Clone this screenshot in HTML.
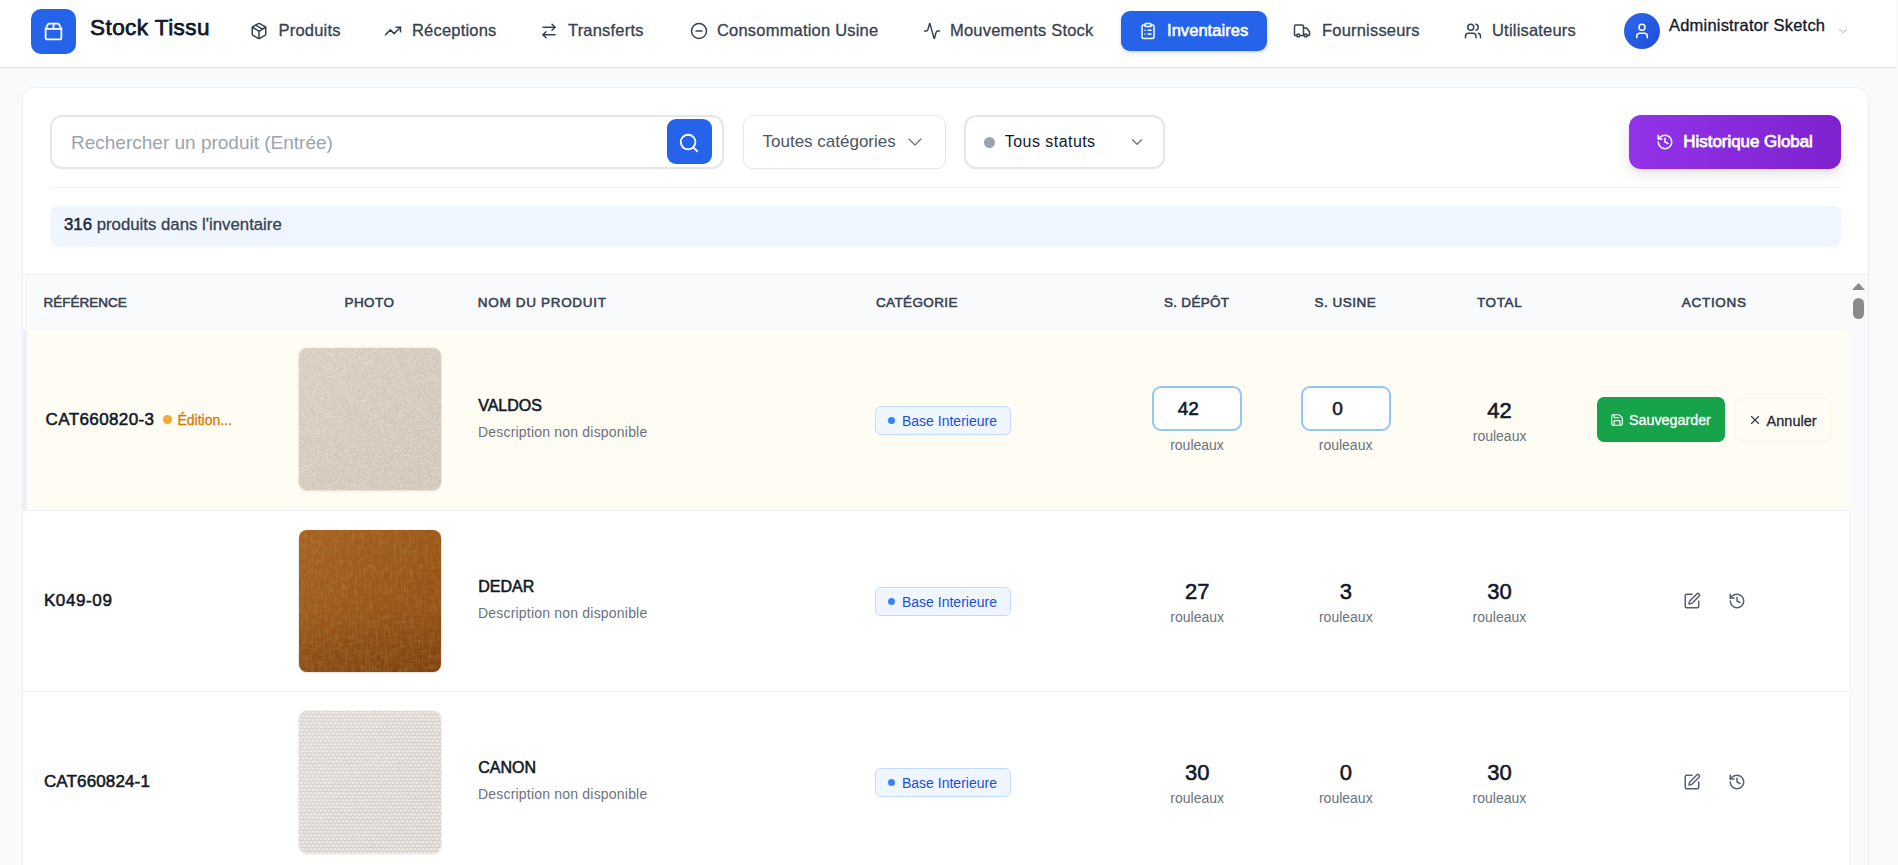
<!DOCTYPE html>
<html lang="fr">
<head>
<meta charset="utf-8">
<title>Stock Tissu - Inventaires</title>
<style>
*{box-sizing:border-box;margin:0;padding:0}
html,body{width:1898px;height:865px;overflow:hidden}
body{position:relative;background:#f9fafb;font-family:"Liberation Sans",sans-serif;color:#111827}
.abs{position:absolute}
svg.i{position:absolute;fill:none;stroke:currentColor;stroke-width:2;stroke-linecap:round;stroke-linejoin:round;overflow:visible}
.t{position:absolute;white-space:nowrap;line-height:1}
.photo{border-radius:8px;box-shadow:0 0 0 1px rgba(0,0,0,.03),0 1px 3px rgba(0,0,0,.10)}
</style>
</head>
<body>
<div class="abs" style="left:0px;top:0px;width:1896px;height:67px;background:#fff"></div>
<div class="abs" style="left:0px;top:67px;width:1896px;height:1px;background:#e5e7eb"></div>
<div class="abs" style="left:0px;top:68px;width:1896px;height:2px;background:linear-gradient(rgba(0,0,0,.025),rgba(0,0,0,0))"></div>
<div class="abs" style="left:31px;top:9px;width:45px;height:45px;border-radius:10px;background:#2563eb"></div>
<svg class="i" style="left:43px;top:21px;color:#fff;stroke-width:2" width="21" height="21" viewBox="0 0 24 24"><path d="M3 9h18v10a2 2 0 0 1-2 2H5a2 2 0 0 1-2-2V9Z"/><path d="m3 9 2.45-4.9A2 2 0 0 1 7.24 3h9.52a2 2 0 0 1 1.8 1.1L21 9"/><path d="M12 3v6"/></svg>
<div class="t" style="top:17.00px;font-size:22.5px;color:#111827;letter-spacing:0.45px;-webkit-text-stroke:.75px #111827;left:90.00px;">Stock Tissu</div>
<svg class="i" style="left:250px;top:22px;color:#374151;stroke-width:2" width="18" height="18" viewBox="0 0 24 24"><path d="M11 21.73a2 2 0 0 0 2 0l7-4A2 2 0 0 0 21 16V8a2 2 0 0 0-1-1.73l-7-4a2 2 0 0 0-2 0l-7 4A2 2 0 0 0 3 8v8a2 2 0 0 0 1 1.73z"/><path d="M12 22V12"/><path d="m3.3 7 7.703 4.734a2 2 0 0 0 1.994 0L20.7 7"/><path d="m7.5 4.27 9 5.15"/></svg>
<div class="t" style="top:22.00px;font-size:16.5px;color:#374151;letter-spacing:0.2px;-webkit-text-stroke:.3px #374151;left:278.50px;">Produits</div>
<svg class="i" style="left:384px;top:21.5px;color:#374151;stroke-width:2" width="18" height="18" viewBox="0 0 24 24"><polyline points="22 7 13.5 15.5 8.5 10.5 2 17"/><polyline points="16 7 22 7 22 13"/></svg>
<div class="t" style="top:22.00px;font-size:16.5px;color:#374151;letter-spacing:0.2px;-webkit-text-stroke:.3px #374151;left:412.00px;">Réceptions</div>
<svg class="i" style="left:540px;top:22px;color:#374151;stroke-width:2" width="18" height="18" viewBox="0 0 24 24"><path d="m16 3 4 4-4 4"/><path d="M20 7H4"/><path d="m8 21-4-4 4-4"/><path d="M4 17h16"/></svg>
<div class="t" style="top:22.00px;font-size:16.5px;color:#374151;letter-spacing:0.2px;-webkit-text-stroke:.3px #374151;left:568.00px;">Transferts</div>
<svg class="i" style="left:689.5px;top:22px;color:#374151;stroke-width:2" width="18" height="18" viewBox="0 0 24 24"><circle cx="12" cy="12" r="10"/><path d="M8 12h8"/></svg>
<div class="t" style="top:22.00px;font-size:16.5px;color:#374151;letter-spacing:0.2px;-webkit-text-stroke:.3px #374151;left:717.00px;">Consommation Usine</div>
<svg class="i" style="left:922.5px;top:22px;color:#374151;stroke-width:2" width="18" height="18" viewBox="0 0 24 24"><path d="M22 12h-2.48a2 2 0 0 0-1.93 1.46l-2.35 8.36a.25.25 0 0 1-.48 0L9.24 2.18a.25.25 0 0 0-.48 0l-2.35 8.36A2 2 0 0 1 4.49 12H2"/></svg>
<div class="t" style="top:22.00px;font-size:16.5px;color:#374151;letter-spacing:0.2px;-webkit-text-stroke:.3px #374151;left:950.00px;">Mouvements Stock</div>
<svg class="i" style="left:1293px;top:22px;color:#374151;stroke-width:2" width="18" height="18" viewBox="0 0 24 24"><path d="M14 18V6a2 2 0 0 0-2-2H4a2 2 0 0 0-2 2v11a1 1 0 0 0 1 1h2"/><path d="M15 18H9"/><path d="M19 18h2a1 1 0 0 0 1-1v-3.65a1 1 0 0 0-.22-.624l-3.48-4.35A1 1 0 0 0 17.52 8H14"/><circle cx="17" cy="18" r="2"/><circle cx="7" cy="18" r="2"/></svg>
<div class="t" style="top:22.00px;font-size:16.5px;color:#374151;letter-spacing:0.2px;-webkit-text-stroke:.3px #374151;left:1322.00px;">Fournisseurs</div>
<svg class="i" style="left:1464px;top:22px;color:#374151;stroke-width:2" width="18" height="18" viewBox="0 0 24 24"><path d="M16 21v-2a4 4 0 0 0-4-4H6a4 4 0 0 0-4 4v2"/><circle cx="9" cy="7" r="4"/><path d="M22 21v-2a4 4 0 0 0-3-3.87"/><path d="M16 3.13a4 4 0 0 1 0 7.75"/></svg>
<div class="t" style="top:22.00px;font-size:16.5px;color:#374151;letter-spacing:0.2px;-webkit-text-stroke:.3px #374151;left:1492.00px;">Utilisateurs</div>
<div class="abs" style="left:1121px;top:11px;width:146px;height:40px;border-radius:9px;background:#2563eb;box-shadow:0 2px 4px rgba(37,99,235,.18),0 1px 2px rgba(0,0,0,.08)"></div>
<svg class="i" style="left:1138.5px;top:22px;color:#fff;stroke-width:2" width="18" height="18" viewBox="0 0 24 24"><rect width="8" height="4" x="8" y="2" rx="1" ry="1"/><path d="M16 4h2a2 2 0 0 1 2 2v14a2 2 0 0 1-2 2H6a2 2 0 0 1-2-2V6a2 2 0 0 1 2-2h2"/><path d="M12 11h4"/><path d="M12 16h4"/><path d="M8 11h.01"/><path d="M8 16h.01"/></svg>
<div class="t" style="top:22.00px;font-size:16.5px;color:#fff;letter-spacing:0.05px;-webkit-text-stroke:.55px #fff;left:1167.00px;">Inventaires</div>
<div class="abs" style="left:1624px;top:13px;width:36px;height:36px;border-radius:50%;background:linear-gradient(135deg,#2d68ee,#1d4ed8)"></div>
<svg class="i" style="left:1633px;top:22px;color:#fff;stroke-width:2" width="18" height="18" viewBox="0 0 24 24"><path d="M19 21v-2a4 4 0 0 0-4-4H9a4 4 0 0 0-4 4v2"/><circle cx="12" cy="7" r="4"/></svg>
<div class="t" style="top:17.00px;font-size:16.5px;color:#111827;letter-spacing:0.2px;-webkit-text-stroke:.3px #111827;left:1669.00px;">Administrator Sketch</div>
<svg class="i" style="left:1836px;top:24px;color:#9ca3af;stroke-width:1.5" width="14" height="14" viewBox="0 0 24 24"><path d="m6 9 6 6 6-6"/></svg>
<div class="abs" style="left:22px;top:87px;width:1847px;height:840px;background:#fff;border:1px solid #edeff3;border-radius:12px;box-shadow:0 1px 2px rgba(0,0,0,.02)"></div>
<div class="abs" style="left:50px;top:115px;width:674px;height:54px;border:2px solid #e5e7eb;border-radius:12px;background:#fff;box-shadow:0 1px 2px rgba(0,0,0,.04)"></div>
<div class="t" style="top:133.00px;font-size:19px;color:#9ca3af;left:71.00px;">Rechercher un produit (Entrée)</div>
<div class="abs" style="left:667px;top:119px;width:45px;height:45px;border-radius:9px;background:#2563eb"></div>
<svg class="i" style="left:678px;top:132px;color:#fff;stroke-width:2" width="22" height="22" viewBox="0 0 24 24"><circle cx="11" cy="11" r="8"/><path d="m21 21-4.3-4.3"/></svg>
<div class="abs" style="left:743px;top:115px;width:203px;height:54px;border:1.5px solid #e5e7eb;border-radius:10px;background:#fff;box-shadow:0 1px 2px rgba(0,0,0,.03)"></div>
<div class="t" style="top:133.00px;font-size:17px;color:#4b5563;left:762.50px;">Toutes catégories</div>
<svg class="i" style="left:902.7px;top:130.3px;color:#6b7280;stroke-width:1.3" width="24" height="24" viewBox="0 0 24 24"><path d="m6 9 6 6 6-6"/></svg>
<div class="abs" style="left:964px;top:115px;width:201px;height:54px;border:2px solid #e5e7eb;border-radius:12px;background:#fff;box-shadow:0 1px 2px rgba(0,0,0,.04)"></div>
<div class="abs" style="left:983.8px;top:137px;width:11px;height:11px;border-radius:50%;background:#9ca3af"></div>
<div class="t" style="top:134.00px;font-size:16px;color:#111827;letter-spacing:0.45px;left:1004.80px;">Tous statuts</div>
<svg class="i" style="left:1127.8px;top:133px;color:#6b7280;stroke-width:1.7" width="18" height="18" viewBox="0 0 24 24"><path d="m6 9 6 6 6-6"/></svg>
<div class="abs" style="left:1629px;top:115px;width:212px;height:54px;border-radius:12px;background:linear-gradient(90deg,#9333ea,#7e22ce);box-shadow:0 6px 14px rgba(0,0,0,.09),0 2px 4px rgba(0,0,0,.06)"></div>
<svg class="i" style="left:1656px;top:132.5px;color:#fff;stroke-width:2" width="18" height="18" viewBox="0 0 24 24"><path d="M3 12a9 9 0 1 0 9-9 9.75 9.75 0 0 0-6.74 2.74L3 8"/><path d="M3 3v5h5"/><path d="M12 7v5l4 2"/></svg>
<div class="t" style="top:134.00px;font-size:16.9px;color:#fff;-webkit-text-stroke:.75px #fff;left:1683.30px;">Historique Global</div>
<div class="abs" style="left:50px;top:187px;width:1791px;height:1px;background:#f1f2f5"></div>
<div class="abs" style="left:50px;top:206px;width:1791px;height:41px;border-radius:8px;background:#eff6ff"></div>
<div class="t" style="top:217.00px;font-size:16.8px;color:#374151;-webkit-text-stroke:.3px #374151;left:64.00px;"><span style="-webkit-text-stroke:.5px #1f2937;color:#1f2937">316</span> produits dans l'inventaire</div>
<div class="abs" style="left:23px;top:274px;width:1845px;height:1px;background:#eceef2"></div>
<div class="abs" style="left:25px;top:275px;width:1824px;height:55px;background:#f8fafc"></div>
<div class="t" style="top:296.00px;font-size:13.5px;color:#374151;-webkit-text-stroke:.55px #374151;left:43.40px;">RÉFÉRENCE</div>
<div class="t" style="top:296.00px;font-size:13.5px;color:#374151;letter-spacing:0.42px;-webkit-text-stroke:.55px #374151;left:69.25px;width:600px;text-align:center;padding-left:0.42px;">PHOTO</div>
<div class="t" style="top:296.00px;font-size:13.5px;color:#374151;letter-spacing:0.68px;-webkit-text-stroke:.55px #374151;left:477.80px;">NOM DU PRODUIT</div>
<div class="t" style="top:296.00px;font-size:13.5px;color:#374151;letter-spacing:0.37px;-webkit-text-stroke:.55px #374151;left:876.00px;">CATÉGORIE</div>
<div class="t" style="top:296.00px;font-size:13.5px;color:#374151;letter-spacing:0.29px;-webkit-text-stroke:.55px #374151;left:896.50px;width:600px;text-align:center;padding-left:0.29px;">S. DÉPÔT</div>
<div class="t" style="top:296.00px;font-size:13.5px;color:#374151;letter-spacing:0.51px;-webkit-text-stroke:.55px #374151;left:1045.20px;width:600px;text-align:center;padding-left:0.51px;">S. USINE</div>
<div class="t" style="top:296.00px;font-size:13.5px;color:#374151;letter-spacing:0.62px;-webkit-text-stroke:.55px #374151;left:1199.40px;width:600px;text-align:center;padding-left:0.62px;">TOTAL</div>
<div class="t" style="top:296.00px;font-size:13.5px;color:#374151;letter-spacing:0.72px;-webkit-text-stroke:.55px #374151;left:1413.90px;width:600px;text-align:center;padding-left:0.72px;">ACTIONS</div>
<div class="abs" style="left:23px;top:330px;width:1826px;height:180px;background:#fffcf3"></div>
<div class="abs" style="left:23px;top:330px;width:4px;height:180px;background:#eef0f4"></div>
<div class="abs" style="left:23px;top:510px;width:1826px;height:1px;background:#f1f2f5"></div>
<div class="t" style="top:411.00px;font-size:17px;color:#111827;letter-spacing:0.38px;-webkit-text-stroke:.55px #111827;left:45.60px;">CAT660820-3</div>
<div class="abs" style="left:163px;top:415px;width:9px;height:9px;border-radius:50%;background:#f5a93a"></div>
<div class="t" style="top:413.00px;font-size:14px;color:#d97706;-webkit-text-stroke:.3px #d97706;left:177.40px;">Édition...</div>
<svg class="abs photo" style="left:299px;top:348px" width="142" height="142" viewBox="0 0 142 142"><defs><linearGradient id="g1" x1="0" y1="0" x2="1" y2="1"><stop offset="0" stop-color="#d8cec0"/><stop offset="1" stop-color="#d1c6b7"/></linearGradient><filter id="n1_0" x="0" y="0" width="100%" height="100%"><feTurbulence type="fractalNoise" baseFrequency="0.5 1.6" numOctaves="2" seed="3"/><feColorMatrix values="0 0 0 0 0.616 0 0 0 0 0.557 0 0 0 0 0.475 -1.040 0 0 0 0.572"/></filter><filter id="n1_1" x="0" y="0" width="100%" height="100%"><feTurbulence type="fractalNoise" baseFrequency="0.5 1.6" numOctaves="2" seed="10"/><feColorMatrix values="0 0 0 0 0.969 0 0 0 0 0.937 0 0 0 0 0.898 -1.200 0 0 0 0.660"/></filter><filter id="n1_2" x="0" y="0" width="100%" height="100%"><feTurbulence type="fractalNoise" baseFrequency="0.04" numOctaves="2" seed="5"/><feColorMatrix values="0 0 0 0 0.710 0 0 0 0 0.659 0 0 0 0 0.580 -0.320 0 0 0 0.176"/></filter></defs><rect width="142" height="142" fill="url(#g1)"/><rect width="142" height="142" filter="url(#n1_0)"/><rect width="142" height="142" filter="url(#n1_1)"/><rect width="142" height="142" filter="url(#n1_2)"/></svg>
<div class="t" style="top:398.00px;font-size:16px;color:#111827;-webkit-text-stroke:.55px #111827;left:478.20px;">VALDOS</div>
<div class="t" style="top:425.00px;font-size:14px;color:#6b7280;letter-spacing:0.2px;left:478.00px;">Description non disponible</div>
<div class="abs" style="left:875px;top:406px;width:136px;height:29px;background:#eff6ff;border:1px solid #bfdbfe;border-radius:6px"></div>
<div class="abs" style="left:888px;top:417px;width:7px;height:7px;border-radius:50%;background:#3b82f6"></div>
<div class="t" style="top:414.00px;font-size:14px;color:#1d4ed8;left:902.00px;">Base Interieure</div>
<div class="abs" style="left:1152px;top:386px;width:90px;height:45px;border:2px solid #93c5fd;border-radius:9px;background:#fff"></div>
<div class="t" style="top:399.00px;font-size:19px;color:#111827;-webkit-text-stroke:.55px #111827;left:1177.80px;">42</div>
<div class="t" style="top:438.00px;font-size:14px;color:#6b7280;left:897.00px;width:600px;text-align:center;padding-left:0px;">rouleaux</div>
<div class="abs" style="left:1301px;top:386px;width:90px;height:45px;border:2px solid #93c5fd;border-radius:9px;background:#fff"></div>
<div class="t" style="top:399.00px;font-size:19px;color:#111827;-webkit-text-stroke:.55px #111827;left:1332.30px;">0</div>
<div class="t" style="top:438.00px;font-size:14px;color:#6b7280;left:1045.60px;width:600px;text-align:center;padding-left:0px;">rouleaux</div>
<div class="t" style="top:400.00px;font-size:22px;color:#111827;-webkit-text-stroke:.55px #111827;left:1199.50px;width:600px;text-align:center;padding-left:0px;">42</div>
<div class="t" style="top:429.00px;font-size:14px;color:#6b7280;left:1199.60px;width:600px;text-align:center;padding-left:0px;">rouleaux</div>
<div class="abs" style="left:1597px;top:397px;width:128px;height:45px;border-radius:7px;background:#16a34a"></div>
<svg class="i" style="left:1610px;top:413px;color:#fff;stroke-width:2" width="14" height="14" viewBox="0 0 24 24"><path d="M15.2 3a2 2 0 0 1 1.4.6l3.8 3.8a2 2 0 0 1 .6 1.4V19a2 2 0 0 1-2 2H5a2 2 0 0 1-2-2V5a2 2 0 0 1 2-2z"/><path d="M17 21v-7a1 1 0 0 0-1-1H8a1 1 0 0 0-1 1v7"/><path d="M7 3v4a1 1 0 0 0 1 1h7"/></svg>
<div class="t" style="top:413.00px;font-size:14.3px;color:#fff;-webkit-text-stroke:.3px #fff;left:1629.00px;">Sauvegarder</div>
<div class="abs" style="left:1734.5px;top:397px;width:96px;height:45px;border:1px solid #fbf5e6;border-radius:7px"></div>
<svg class="i" style="left:1747.7px;top:412.5px;color:#374151;stroke-width:2" width="14" height="14" viewBox="0 0 24 24"><path d="M18 6 6 18"/><path d="m6 6 12 12"/></svg>
<div class="t" style="top:414.00px;font-size:14.5px;color:#1f2937;-webkit-text-stroke:.3px #1f2937;left:1766.60px;">Annuler</div>
<div class="abs" style="left:23px;top:511px;width:1826px;height:180px;background:#fff"></div>
<div class="abs" style="left:23px;top:691px;width:1826px;height:1px;background:#f1f2f5"></div>
<div class="t" style="top:592.00px;font-size:17px;color:#111827;letter-spacing:0.62px;-webkit-text-stroke:.55px #111827;left:43.90px;">K049-09</div>
<svg class="abs photo" style="left:299px;top:530px" width="142" height="142" viewBox="0 0 142 142"><defs><linearGradient id="g2" x1="0" y1="0" x2="1" y2="1"><stop offset="0" stop-color="#a96221"/><stop offset="1" stop-color="#8e4811"/></linearGradient><filter id="n2_0" x="0" y="0" width="100%" height="100%"><feTurbulence type="fractalNoise" baseFrequency="0.06 0.6" numOctaves="2" seed="11"/><feColorMatrix values="0 0 0 0 0.290 0 0 0 0 0.133 0 0 0 0 0.012 -1.000 0 0 0 0.550"/></filter><filter id="n2_1" x="0" y="0" width="100%" height="100%"><feTurbulence type="fractalNoise" baseFrequency="0.6 0.06" numOctaves="2" seed="12"/><feColorMatrix values="0 0 0 0 0.784 0 0 0 0 0.510 0 0 0 0 0.227 -0.350 0 0 0 0.193"/></filter><filter id="n2_2" x="0" y="0" width="100%" height="100%"><feTurbulence type="fractalNoise" baseFrequency="0.2" numOctaves="3" seed="13"/><feColorMatrix values="0 0 0 0 0.290 0 0 0 0 0.133 0 0 0 0 0.012 -1.000 0 0 0 0.550"/></filter><filter id="n2_3" x="0" y="0" width="100%" height="100%"><feTurbulence type="fractalNoise" baseFrequency="0.2" numOctaves="3" seed="15"/><feColorMatrix values="0 0 0 0 0.784 0 0 0 0 0.510 0 0 0 0 0.227 -0.300 0 0 0 0.165"/></filter><linearGradient id="vd2" x1="0" y1="0" x2="0" y2="1"><stop offset="0.55" stop-color="#3a1800" stop-opacity="0"/><stop offset="1" stop-color="#3a1800" stop-opacity=".22"/></linearGradient></defs><rect width="142" height="142" fill="url(#g2)"/><rect width="142" height="142" fill="url(#vd2)"/><rect width="142" height="142" filter="url(#n2_0)"/><rect width="142" height="142" filter="url(#n2_1)"/><rect width="142" height="142" filter="url(#n2_2)"/><rect width="142" height="142" filter="url(#n2_3)"/></svg>
<div class="t" style="top:579.00px;font-size:16px;color:#111827;-webkit-text-stroke:.55px #111827;left:478.20px;">DEDAR</div>
<div class="t" style="top:606.00px;font-size:14px;color:#6b7280;letter-spacing:0.2px;left:478.00px;">Description non disponible</div>
<div class="abs" style="left:875px;top:587px;width:136px;height:29px;background:#eff6ff;border:1px solid #bfdbfe;border-radius:6px"></div>
<div class="abs" style="left:888px;top:598px;width:7px;height:7px;border-radius:50%;background:#3b82f6"></div>
<div class="t" style="top:595.00px;font-size:14px;color:#1d4ed8;left:902.00px;">Base Interieure</div>
<div class="t" style="top:581.00px;font-size:22px;color:#111827;-webkit-text-stroke:.55px #111827;left:897.20px;width:600px;text-align:center;padding-left:0px;">27</div>
<div class="t" style="top:610.00px;font-size:14px;color:#6b7280;left:897.20px;width:600px;text-align:center;padding-left:0px;">rouleaux</div>
<div class="t" style="top:581.00px;font-size:22px;color:#111827;-webkit-text-stroke:.55px #111827;left:1045.80px;width:600px;text-align:center;padding-left:0px;">3</div>
<div class="t" style="top:610.00px;font-size:14px;color:#6b7280;left:1045.80px;width:600px;text-align:center;padding-left:0px;">rouleaux</div>
<div class="t" style="top:581.00px;font-size:22px;color:#111827;-webkit-text-stroke:.55px #111827;left:1199.40px;width:600px;text-align:center;padding-left:0px;">30</div>
<div class="t" style="top:610.00px;font-size:14px;color:#6b7280;left:1199.40px;width:600px;text-align:center;padding-left:0px;">rouleaux</div>
<svg class="i" style="left:1683px;top:592px;color:#566070;stroke-width:2" width="18" height="18" viewBox="0 0 24 24"><path d="M12 3H5a2 2 0 0 0-2 2v14a2 2 0 0 0 2 2h14a2 2 0 0 0 2-2v-7"/><path d="M18.375 2.625a1 1 0 0 1 3 3l-9.013 9.014a2 2 0 0 1-.853.505l-2.873.84a.5.5 0 0 1-.62-.62l.84-2.873a2 2 0 0 1 .506-.852z"/></svg>
<svg class="i" style="left:1727.8px;top:591.7px;color:#566070;stroke-width:2" width="18" height="18" viewBox="0 0 24 24"><path d="M3 12a9 9 0 1 0 9-9 9.75 9.75 0 0 0-6.74 2.74L3 8"/><path d="M3 3v5h5"/><path d="M12 7v5l4 2"/></svg>
<div class="abs" style="left:23px;top:692px;width:1826px;height:180px;background:#fff"></div>
<div class="abs" style="left:23px;top:872px;width:1826px;height:1px;background:#f1f2f5"></div>
<div class="t" style="top:773.00px;font-size:17px;color:#111827;letter-spacing:0.14px;-webkit-text-stroke:.55px #111827;left:43.90px;">CAT660824-1</div>
<svg class="abs photo" style="left:299px;top:711px" width="142" height="142" viewBox="0 0 142 142"><defs><linearGradient id="g3" x1="0" y1="0" x2="1" y2="1"><stop offset="0" stop-color="#dad4cf"/><stop offset="1" stop-color="#d2cbc6"/></linearGradient><filter id="n3_0" x="0" y="0" width="100%" height="100%"><feTurbulence type="fractalNoise" baseFrequency="0.9 1.1" numOctaves="2" seed="21"/><feColorMatrix values="0 0 0 0 0.639 0 0 0 0 0.608 0 0 0 0 0.580 -0.720 0 0 0 0.396"/></filter><filter id="n3_1" x="0" y="0" width="100%" height="100%"><feTurbulence type="fractalNoise" baseFrequency="0.9 1.1" numOctaves="2" seed="28"/><feColorMatrix values="0 0 0 0 0.969 0 0 0 0 0.957 0 0 0 0 0.945 -0.960 0 0 0 0.528"/></filter><pattern id="pw3" width="4" height="7" patternUnits="userSpaceOnUse"><ellipse cx="2" cy="1.75" rx="1.6" ry="1.3" fill="#f1ede9"/><ellipse cx="0" cy="5.25" rx="1.6" ry="1.3" fill="#f1ede9"/><ellipse cx="4" cy="5.25" rx="1.6" ry="1.3" fill="#f1ede9"/></pattern></defs><rect width="142" height="142" fill="url(#g3)"/><rect width="142" height="142" fill="url(#pw3)" opacity=".85"/><rect width="142" height="142" filter="url(#n3_0)"/><rect width="142" height="142" filter="url(#n3_1)"/></svg>
<div class="t" style="top:760.00px;font-size:16px;color:#111827;-webkit-text-stroke:.55px #111827;left:478.20px;">CANON</div>
<div class="t" style="top:787.00px;font-size:14px;color:#6b7280;letter-spacing:0.2px;left:478.00px;">Description non disponible</div>
<div class="abs" style="left:875px;top:768px;width:136px;height:29px;background:#eff6ff;border:1px solid #bfdbfe;border-radius:6px"></div>
<div class="abs" style="left:888px;top:779px;width:7px;height:7px;border-radius:50%;background:#3b82f6"></div>
<div class="t" style="top:776.00px;font-size:14px;color:#1d4ed8;left:902.00px;">Base Interieure</div>
<div class="t" style="top:762.00px;font-size:22px;color:#111827;-webkit-text-stroke:.55px #111827;left:897.20px;width:600px;text-align:center;padding-left:0px;">30</div>
<div class="t" style="top:791.00px;font-size:14px;color:#6b7280;left:897.20px;width:600px;text-align:center;padding-left:0px;">rouleaux</div>
<div class="t" style="top:762.00px;font-size:22px;color:#111827;-webkit-text-stroke:.55px #111827;left:1045.80px;width:600px;text-align:center;padding-left:0px;">0</div>
<div class="t" style="top:791.00px;font-size:14px;color:#6b7280;left:1045.80px;width:600px;text-align:center;padding-left:0px;">rouleaux</div>
<div class="t" style="top:762.00px;font-size:22px;color:#111827;-webkit-text-stroke:.55px #111827;left:1199.40px;width:600px;text-align:center;padding-left:0px;">30</div>
<div class="t" style="top:791.00px;font-size:14px;color:#6b7280;left:1199.40px;width:600px;text-align:center;padding-left:0px;">rouleaux</div>
<svg class="i" style="left:1683px;top:773px;color:#566070;stroke-width:2" width="18" height="18" viewBox="0 0 24 24"><path d="M12 3H5a2 2 0 0 0-2 2v14a2 2 0 0 0 2 2h14a2 2 0 0 0 2-2v-7"/><path d="M18.375 2.625a1 1 0 0 1 3 3l-9.013 9.014a2 2 0 0 1-.853.505l-2.873.84a.5.5 0 0 1-.62-.62l.84-2.873a2 2 0 0 1 .506-.852z"/></svg>
<svg class="i" style="left:1727.8px;top:772.7px;color:#566070;stroke-width:2" width="18" height="18" viewBox="0 0 24 24"><path d="M3 12a9 9 0 1 0 9-9 9.75 9.75 0 0 0-6.74 2.74L3 8"/><path d="M3 3v5h5"/><path d="M12 7v5l4 2"/></svg>
<div class="abs" style="left:1849px;top:275px;width:19px;height:600px;background:#fafafa"></div>
<svg class="abs" style="left:1851px;top:282px" width="15" height="9" viewBox="0 0 15 9"><path d="M1 8 L7.5 1 L14 8 Z" fill="#8a8a8a"/></svg>
<div class="abs" style="left:1853px;top:298px;width:11px;height:21px;border-radius:6px;background:#8a8a8a"></div>
<div class="abs" style="left:1896px;top:0px;width:2px;height:865px;background:#f9fafb"></div>
</body>
</html>
